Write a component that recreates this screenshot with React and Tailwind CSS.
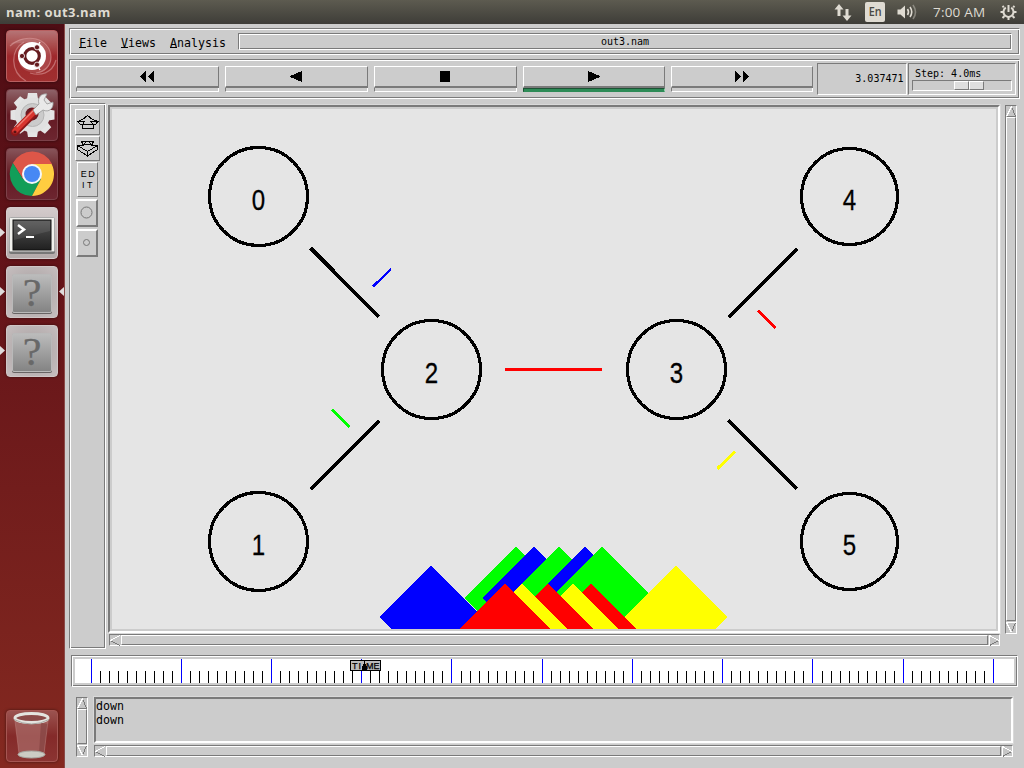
import React from "react";

const GROOVE =
  "border border-t-[#7a7a7a] border-l-[#7a7a7a] border-b-white border-r-white shadow-[inset_1px_1px_0_#fff,inset_-1px_-1px_0_#7a7a7a]";
const SUNKEN = "border border-t-[#7a7a7a] border-l-[#7a7a7a] border-b-white border-r-white";
const RAISED = "border border-t-white border-l-white border-b-[#7a7a7a] border-r-[#7a7a7a]";
const MONO = "font-['DejaVu_Sans_Mono','Liberation_Mono',monospace]";

function TopBar() {
  return (
    <header className="flex h-6 shrink-0 items-center bg-linear-to-b from-[#5d5b50] to-[#3e3d38] pr-[7px] pl-[6px] font-['Open_Sans','Noto_Sans',sans-serif] text-[#dfdbd2]">
      <span className="text-[13px] leading-6 font-bold tracking-[0.45px]">nam: out3.nam</span>
      <div className="ml-auto flex items-center">
        <svg width="18" height="18" viewBox="0 0 18 18" fill="#dfdbd2">
          <path d="M5 1 9.500 6.500H6.500V13h-3V6.500H.5zM13 18l4.500-5.500h-3V6h-3v6.500h-3z" />
        </svg>
        <span className="ml-[13px] flex h-5 w-5 items-center justify-center rounded-[2px] bg-[#dfdbd2] text-[12px] font-semibold text-[#4a4943]">
          <span className="scale-x-90">En</span>
        </span>
        <svg className="ml-[12px]" width="21" height="18" viewBox="0 0 21 18" fill="none" stroke="#dfdbd2" strokeWidth="1.600">
          <path d="M.5 6.500h3l4.500-4v13l-4.500-4h-3z" fill="#dfdbd2" stroke="none" />
          <path d="M10.500 6q2 3 0 6" />
          <path d="M13 4q3.500 5 0 10" />
          <path d="M16 2q5 7 0 14" opacity=".4" />
        </svg>
        <span className="ml-[15px] w-[54px] text-[13.5px] leading-6 tracking-[0.2px] whitespace-nowrap">7:00 AM</span>
        <svg className="ml-[13px]" width="17" height="18" viewBox="0 0 17 18" fill="none" stroke="#dfdbd2">
          <path d="M5.800 4.700a5 5 0 1 0 5.400 0" strokeWidth="2" />
          <path d="M8.500 2v7" strokeWidth="2" />
          <path d="M3.800 4.300 2.500 3M13.200 4.300 14.500 3M3.500 9H.5M13.500 9h3M4.500 13l-2 2M12.500 13l2 2M8.500 14v3" strokeWidth="2" />
        </svg>
      </div>
    </header>
  );
}

function Tile({ tone, pip, focus, children }) {
  return (
    <div className="relative ml-[6px] h-[52px] w-[52px] shrink-0">
      <div className={"h-[52px] w-[52px] overflow-hidden rounded-[4px] border shadow-[0_0_3px_rgba(0,0,0,0.5)] " + tone}>
        <svg className="-m-px block" width="52" height="52" viewBox="0 0 52 52">
          {children}
        </svg>
      </div>
      {pip && (
        <svg className="absolute top-[21px] -left-[6px]" width="5" height="9" viewBox="0 0 5 9">
          <path d="M0 0 5 4.500 0 9z" fill="#dfdbdb" />
        </svg>
      )}
      {focus && (
        <svg className="absolute top-[21px] left-[53px]" width="5" height="9" viewBox="0 0 5 9">
          <path d="M5 0 0 4.500 5 9z" fill="#dfdbdb" />
        </svg>
      )}
    </div>
  );
}

function UnknownApp({ focus }) {
  return (
    <Tile pip focus={focus} tone="border-[#cfc6c6] bg-radial from-[#a7a0a0] to-[#c6bebf]">
      <defs>
        <linearGradient id="plate" x1="0" y1="0" x2="0" y2="1">
          <stop offset="0" stopColor="#bcbcbc" />
          <stop offset="1" stopColor="#838383" />
        </linearGradient>
      </defs>
      <rect x="6" y="9" width="40" height="39" rx="2" fill="#686464" />
      <rect x="6.500" y="8.500" width="39" height="38" rx="1.500" fill="url(#plate)" stroke="#b9b9b9" />
      <text transform="translate(26 39.500) scale(1.080 1)" textAnchor="middle" fontSize="39" fontFamily="Liberation Serif, serif" fill="#686868" stroke="#686868" strokeWidth=".3">
        ?
      </text>
    </Tile>
  );
}

function Launcher() {
  const teeth = [0, 45, 90, 135, 180, 225, 270, 315];
  return (
    <nav className="flex w-[65px] shrink-0 flex-col gap-[7px] border-r border-[#8a4a48] bg-linear-to-b from-[#4e0d14] via-[#651419] via-35% to-[#842920] pt-[6px] pb-[6px]">
      <Tile tone="border-[#b85f60] bg-linear-to-b from-[#b57375] via-[#9f292d] to-[#a03030]">
        <path d="M4 14C20 3 43 10 45 27 46 38 36 44 30 43 10 42 6 24 26 12z" fill="#fff" opacity=".13" />
        <g fill="none" stroke="#e3aaaa" strokeWidth="1.200" opacity=".5">
          <path d="M4 16C20 2 44 8 45 27 45 36 38 42 30 43" />
          <path d="M20 51C4 42 4 20 18 12" />
          <path d="M50 30C46 44 34 46 24 43" />
        </g>
        <circle cx="26" cy="26" r="14" fill="#fff" />
        <circle cx="26" cy="26" r="7.300" fill="none" stroke="#651b1f" strokeWidth="3.200" />
        <g stroke="#fff" strokeWidth="1.300">
          <path d="M12 26h6M30 19l4-7M30 33l4 7" />
        </g>
        <g fill="#651b1f" stroke="#fff" strokeWidth=".8">
          <circle cx="16" cy="26" r="2.600" />
          <circle cx="31" cy="17.300" r="2.600" />
          <circle cx="31" cy="34.700" r="2.600" />
        </g>
      </Tile>
      <Tile tone="border-[#7c4149] bg-linear-to-b from-[#8e6268] via-[#641923] to-[#6d2630]">
        <g fill="#e4e4e4">
          {teeth.map((a) => (
            <path key={a} d="M21 10 22 4h9l1 6z" transform={`rotate(${a} 26.500 26)`} />
          ))}
        </g>
        <circle cx="26.500" cy="26" r="17.500" fill="#e0e0e0" />
        <circle cx="26.500" cy="26" r="11.500" fill="#cbcbcb" stroke="#b5b5b5" />
        <circle cx="26" cy="25" r="6.500" fill="#6b1c24" />
        <path d="M9 43 29 23" stroke="#8f1718" strokeWidth="8" strokeLinecap="round" />
        <path d="M9 42 29 22" stroke="#d8352f" strokeWidth="5.500" strokeLinecap="round" />
        <path d="M11 38 27 22" stroke="#ee8075" strokeWidth="1.300" />
        <circle cx="9" cy="43" r="1.600" fill="#5b1113" />
        <path d="M27 21 33 15C31 9 35 4 41 5l-3 6 3 4 6-2c1 6-4 11-10 8l-7 5z" fill="#e9e9e9" stroke="#979797" strokeWidth=".8" />
      </Tile>
      <Tile tone="border-[#7c4149] bg-linear-to-b from-[#87545a] via-[#641923] to-[#6d2630]">
        <path d="M26 26 26 16H46A22 22 0 0 0 6.900 15L17 31z" fill="#dd5648" />
        <path d="M6.900 15A22 22 0 0 0 26 48L35 31 17 31z" fill="#129e59" />
        <path d="M26 16H45.600A22 22 0 0 1 26 48L35 31z" fill="#ffcd40" />
        <circle cx="26" cy="26" r="10" fill="#f5f7f8" />
        <circle cx="26" cy="26" r="8" fill="#4788f4" />
      </Tile>
      <Tile pip tone="border-[#d5cdce] bg-linear-to-b from-[#d3cbcb] to-[#b3aaaa]">
        <defs>
          <linearGradient id="screen" x1="0" y1="0" x2="0" y2="1">
            <stop offset="0" stopColor="#555" />
            <stop offset="1" stopColor="#202020" />
          </linearGradient>
        </defs>
        <rect x="3" y="11" width="46" height="36" rx="2" fill="#777" />
        <rect x="3.500" y="10.500" width="45" height="34" rx="1" fill="#f0f0ec" stroke="#aaa" />
        <rect x="7" y="13" width="38" height="30" fill="url(#screen)" stroke="#111" />
        <path d="M8 14h36v10L8 33z" fill="#fff" opacity=".09" />
        <path d="m12 18 6 4.500-6 4.500" stroke="#fff" strokeWidth="2.500" fill="none" />
        <path d="M20 30h8" stroke="#fff" strokeWidth="2" />
      </Tile>
      <UnknownApp focus />
      <UnknownApp />
      <div className="mt-auto">
        <Tile tone="border-[#a55652] bg-linear-to-b from-[#9b5350] via-[#842a29] to-[#8b3432]">
          <path d="M9 11 13 44q12 6 25 0l4-33z" fill="#a86866" opacity=".75" />
          <path d="M35 13 33 43l5-1 4-28z" fill="#612626" opacity=".3" />
          <path d="m9 11 4 33M42 11l-4 33" stroke="#c78e8a" opacity=".4" />
          <ellipse cx="25.500" cy="44.500" rx="13.500" ry="3.500" fill="#ccccc4" stroke="#a6a6a0" />
          <ellipse cx="25.500" cy="8" rx="16.500" ry="4.500" fill="#8b4a48" stroke="#e4e4df" strokeWidth="3" />
          <path d="M8 9.500q17.500 9 35 0" fill="none" stroke="#a8a8a3" />
        </Tile>
      </div>
    </nav>
  );
}

function MenuBar() {
  return (
    <div className={"flex h-[27px] items-center pr-[7px] pl-[9px] " + GROOVE + " " + MONO}>
      {["File", "Views", "Analysis"].map((m) => (
        <span key={m} className="mr-[14px] flex h-[14px] pt-px text-[11.63px] leading-[14px] text-black">
          <span className="h-[12px] border-b border-black">{m[0]}</span>
          <span>{m.slice(1)}</span>
        </span>
      ))}
      <div className={"-ml-[2px] flex h-[17px] flex-1 items-center justify-center pt-px text-[10px] leading-none " + GROOVE}>
        out3.nam
      </div>
    </div>
  );
}

const controls = [
  { w: "w-[143px]", d: "M7 0v11L1 6V5zM15 0v11l-6-5V5z" },
  { w: "w-[143px]", d: "M14 0v11L2 6V5z" },
  { w: "w-[143px]", d: "M3 0h10v11H3z" },
  { w: "w-[142px]", active: true, d: "M3 0v11l12-5V5z" },
  { w: "w-[142px]", d: "M2 0v11l6-5V5zM10 0v11l6-5V5z" },
];

function ControlBar() {
  return (
    <div className={"mt-1 flex h-10 pt-[3px] pl-[6px] " + GROOVE + " " + MONO}>
      <div className="mt-[3px] flex gap-[6px]">
        {controls.map((c, i) => (
          <div key={i} className={c.w}>
            <div className="flex h-[22px] justify-center border border-b-2 border-t-white border-r-[#7a7a7a] border-b-[#7a7a7a] border-l-white pt-[4px]">
              <svg width="18" height="11" viewBox="0 0 18 11" shapeRendering="crispEdges">
                <path d={c.d} />
              </svg>
            </div>
            <div
              className={
                c.active
                  ? "h-1 border border-t-[#1c5334] border-r-[#8fd0aa] border-b-[#2e8b57] border-l-[#1c5334] bg-[#2e8b57]"
                  : "h-1 border-r border-b border-l border-r-white border-b-white border-l-[#7a7a7a]"
              }
            />
          </div>
        ))}
      </div>
      <div className={"ml-1 flex h-8 w-[90px] items-center justify-end pr-[2.5px] pb-px text-[10px] leading-none " + SUNKEN}>3.037471</div>
      <div className={"ml-px h-8 w-[108px] px-[3px] pt-[4px] " + SUNKEN}>
        <div className="h-[12px] pl-[3px] text-[10px] leading-[12px] whitespace-pre">Step: 4.0ms</div>
        <div className={"flex h-[11px] pl-[41px] " + SUNKEN}>
          <div className={"h-[9px] w-[15px] bg-[#dedede] " + RAISED} />
          <div className={"h-[9px] w-[15px] bg-[#dedede] " + RAISED} />
        </div>
      </div>
    </div>
  );
}

function ToolStrip() {
  return (
    <div className={"flex h-[546px] w-[37px] flex-col pt-[5px] pl-[5px] " + GROOVE}>
      <div className={"flex h-[26px] w-[25px] items-center justify-center " + RAISED}>
        <svg width="23" height="16" viewBox="0 0 23 16" fill="none" stroke="#000" shapeRendering="crispEdges">
          <path d="M11.500 1.500 6.500 5.500 1.500 7.500 4.500 10.500H6.500V14.500H17.500V10.500H19.500L22 7.500 16.500 5.500z" />
          <path d="M1.500 7.500H8.500L6.500 10.500M22 7.500H15L17.500 10.500M6.500 10.500H17.500" />
        </svg>
      </div>
      <div className={"mt-px flex h-[25px] w-[25px] items-center justify-center " + RAISED}>
        <svg width="23" height="16" viewBox="0 0 23 16" fill="none" stroke="#000" shapeRendering="crispEdges">
          <path d="M1.500 4.500H7.500L5.500 .5H9.500L8.500 3.500H14.500L13.500 .5H17.500L15.500 4.500H21.500V8.500L11.500 15 1.500 8.500z" />
          <path d="M1.500 4.500 11.500 10.500 21.500 4.500M11.500 10.500V15M9.500 .5H13.500" />
        </svg>
      </div>
      <div className={"mt-px ml-[2px] flex h-[35px] w-[21px] flex-col items-center justify-center pl-[2px] font-['Liberation_Sans',Arial,sans-serif] text-[9px] leading-[11px] " + RAISED}>
        <span className="tracking-[1.500px]">ED</span>
        <span className="tracking-[2.500px]">IT</span>
      </div>
      {[5.5, 3].map((r) => (
        <div
          key={r}
          className="mt-[2px] ml-px flex h-7 w-[22px] items-center justify-center border-2 border-t-white border-r-[#7a7a7a] border-b-[#7a7a7a] border-l-white"
        >
          <svg className="-mt-[2px] -ml-[2px] shrink-0" width="13" height="13" viewBox="0 0 13 13">
            <circle cx="6.500" cy="6.500" r={r} fill="none" stroke="#777" />
          </svg>
        </div>
      ))}
    </div>
  );
}

function Arrow({ dir }) {
  const shapes = {
    left: ["M10 .5 .5 5.500", "M.5 5.500 10 10.500V.5"],
    right: ["M.5 10.500V.5L10 5.500", "M10 5.500 .5 10.500"],
    up: ["M.5 10.500 5.500 .5", "M5.500 .5 9.500 10.500H.5"],
    down: ["M5.500 10.500 .5 .5H9.500", "M9.500 .5 5.500 10.500"],
  };
  return (
    <svg className="block shrink-0" width="10" height="11" viewBox="0 0 10 11" fill="none" shapeRendering="crispEdges">
      <path d={shapes[dir][1]} stroke="#7a7a7a" />
      <path d={shapes[dir][0]} stroke="#fff" />
    </svg>
  );
}

function HScroll({ className }) {
  return (
    <div className={"flex h-3 bg-[#c6c6c6] " + SUNKEN + " " + className}>
      <Arrow dir="left" />
      <div className={"mx-px h-[10px] flex-1 bg-[#ccc] " + RAISED} />
      <Arrow dir="right" />
    </div>
  );
}

function VScroll({ className }) {
  return (
    <div className={"flex w-3 flex-col bg-[#c6c6c6] " + SUNKEN + " " + className}>
      <Arrow dir="up" />
      <div className={"mb-px w-[10px] flex-1 bg-[#ccc] " + RAISED} />
      <Arrow dir="down" />
    </div>
  );
}

const nodes = [
  { id: 0, x: 258.5, y: 196.5, r: 49 },
  { id: 1, x: 258.5, y: 541.5, r: 49 },
  { id: 2, x: 431.5, y: 369.5, r: 49 },
  { id: 3, x: 676.5, y: 369.5, r: 49 },
  { id: 4, x: 849.5, y: 196.5, r: 48 },
  { id: 5, x: 849.5, y: 541.5, r: 48 },
];

const queued = [
  [516, 547, "#0f0"],
  [534.5, 547, "#00f"],
  [559.5, 547, "#0f0"],
  [585, 547, "#00f"],
  [602, 547, "#0f0"],
  [431.5, 566, "#00f"],
  [676.5, 566, "#ff0"],
  [591, 584, "#f00"],
  [573, 584, "#ff0"],
  [548.5, 584, "#f00"],
  [522.5, 584, "#ff0"],
  [505, 584, "#f00"],
];

function NetworkCanvas() {
  return (
    <div className="h-[528px] w-[892px] border-2 border-t-[#7a7a7a] border-r-white border-b-white border-l-[#7a7a7a] p-[2px] shadow-[0_0_0_1px_#d9d9d9]">
      <svg className="block bg-[#e5e5e5]" width="884" height="520" viewBox="112 109 884 520" shapeRendering="crispEdges">
        <g stroke="#000" strokeWidth="3.800">
          <path d="M310.500 248 379 317M310.500 489.500 379 421M728.500 317.500 797 249M728.500 420.500 797 489" />
        </g>
        <path d="M505 369.500H602" stroke="#f00" strokeWidth="3" />
        <path d="M373 286.500 391 269" stroke="#00f" strokeWidth="2.300" />
        <path d="M332 409.500 349.500 427" stroke="#0f0" strokeWidth="2.900" />
        <path d="M758 310.500 775.500 328" stroke="#f00" strokeWidth="2.900" />
        <path d="M717.500 468.500 735 451.500" stroke="#ff0" strokeWidth="2.900" />
        <g transform="translate(-.1 -.5)">
          {queued.map(([x, y, c], i) => (
            <polygon key={i} fill={c} points={`${x},${y} ${x + 51.5},${y + 51.5} ${x},${y + 103} ${x - 51.5},${y + 51.5}`} />
          ))}
        </g>
        {nodes.map((n) => (
          <g key={n.id}>
            <circle cx={n.x} cy={n.y} r={n.r} fill="none" stroke="#000" strokeWidth="3.200" />
            <text
              transform={`translate(${n.x} ${n.y + 13.5}) scale(.83 1)`}
              textAnchor="middle"
              fontFamily="Liberation Sans, Arial, sans-serif"
              fontSize="29"
              stroke="#000"
              strokeWidth=".3"
            >
              {n.id}
            </text>
          </g>
        ))}
      </svg>
    </div>
  );
}

const ticks = Array.from({ length: 101 }, (_, i) => ({
  x: 91.5 + 9 * i + (i > 80 ? 2 : i > 40 ? 1 : 0),
  major: i % 10 === 0,
}));

function Timeline() {
  return (
    <div className={"mt-[6px] ml-[2px] h-8 w-[947px] pt-[3px] pl-[3px] " + GROOVE}>
      <svg className="block bg-white" width="939" height="24" viewBox="75 659 939 24" shapeRendering="crispEdges">
        {ticks.map((t) => (
          <path key={t.x} d={`M${t.x} ${t.major ? 659 : 671}V683`} stroke={t.major ? "#00f" : "#000"} />
        ))}
        <rect x="350.500" y="660.500" width="30" height="10" fill="#bbb" stroke="#000" />
        <text fontSize="9" fontFamily="Liberation Sans, Arial, sans-serif" y="668.500" stroke="#000" strokeWidth=".25">
          <tspan x="352">T</tspan>
          <tspan x="358.500">I</tspan>
          <tspan x="366">M</tspan>
          <tspan x="373.500">E</tspan>
        </text>
        <path d="M364 661h1v3h1v2h1v4h-5v-4h1v-2h1z" />
      </svg>
    </div>
  );
}

function LogPane() {
  return (
    <div className="mt-[10px] ml-[7px] flex gap-[6px]">
      <VScroll className="h-[60px]" />
      <div className="w-[919px]">
        <div
          className={
            "h-[46px] border-2 border-t-[#7a7a7a] border-r-white border-b-white border-l-[#7a7a7a] text-[11.63px] leading-[14px] shadow-[0_0_0_1px_#d9d9d9] " +
            MONO
          }
        >
          <div>down</div>
          <div>down</div>
        </div>
        <HScroll className="mt-[2px]" />
      </div>
    </div>
  );
}

export default function App() {
  return (
    <div className="flex h-[768px] w-[1024px] flex-col overflow-hidden bg-[#ccc] text-black">
      <TopBar />
      <div className="flex flex-1">
        <Launcher />
        <main className="ml-1 w-[951px] pt-1">
          <MenuBar />
          <ControlBar />
          <div className="mt-1 flex">
            <ToolStrip />
            <div className="mt-[2px] ml-[2px]">
              <NetworkCanvas />
              <HScroll className="mt-px ml-px w-[891px]" />
            </div>
            <VScroll className="mt-[2px] ml-[5px] h-[529px]" />
          </div>
          <Timeline />
          <LogPane />
        </main>
      </div>
    </div>
  );
}
